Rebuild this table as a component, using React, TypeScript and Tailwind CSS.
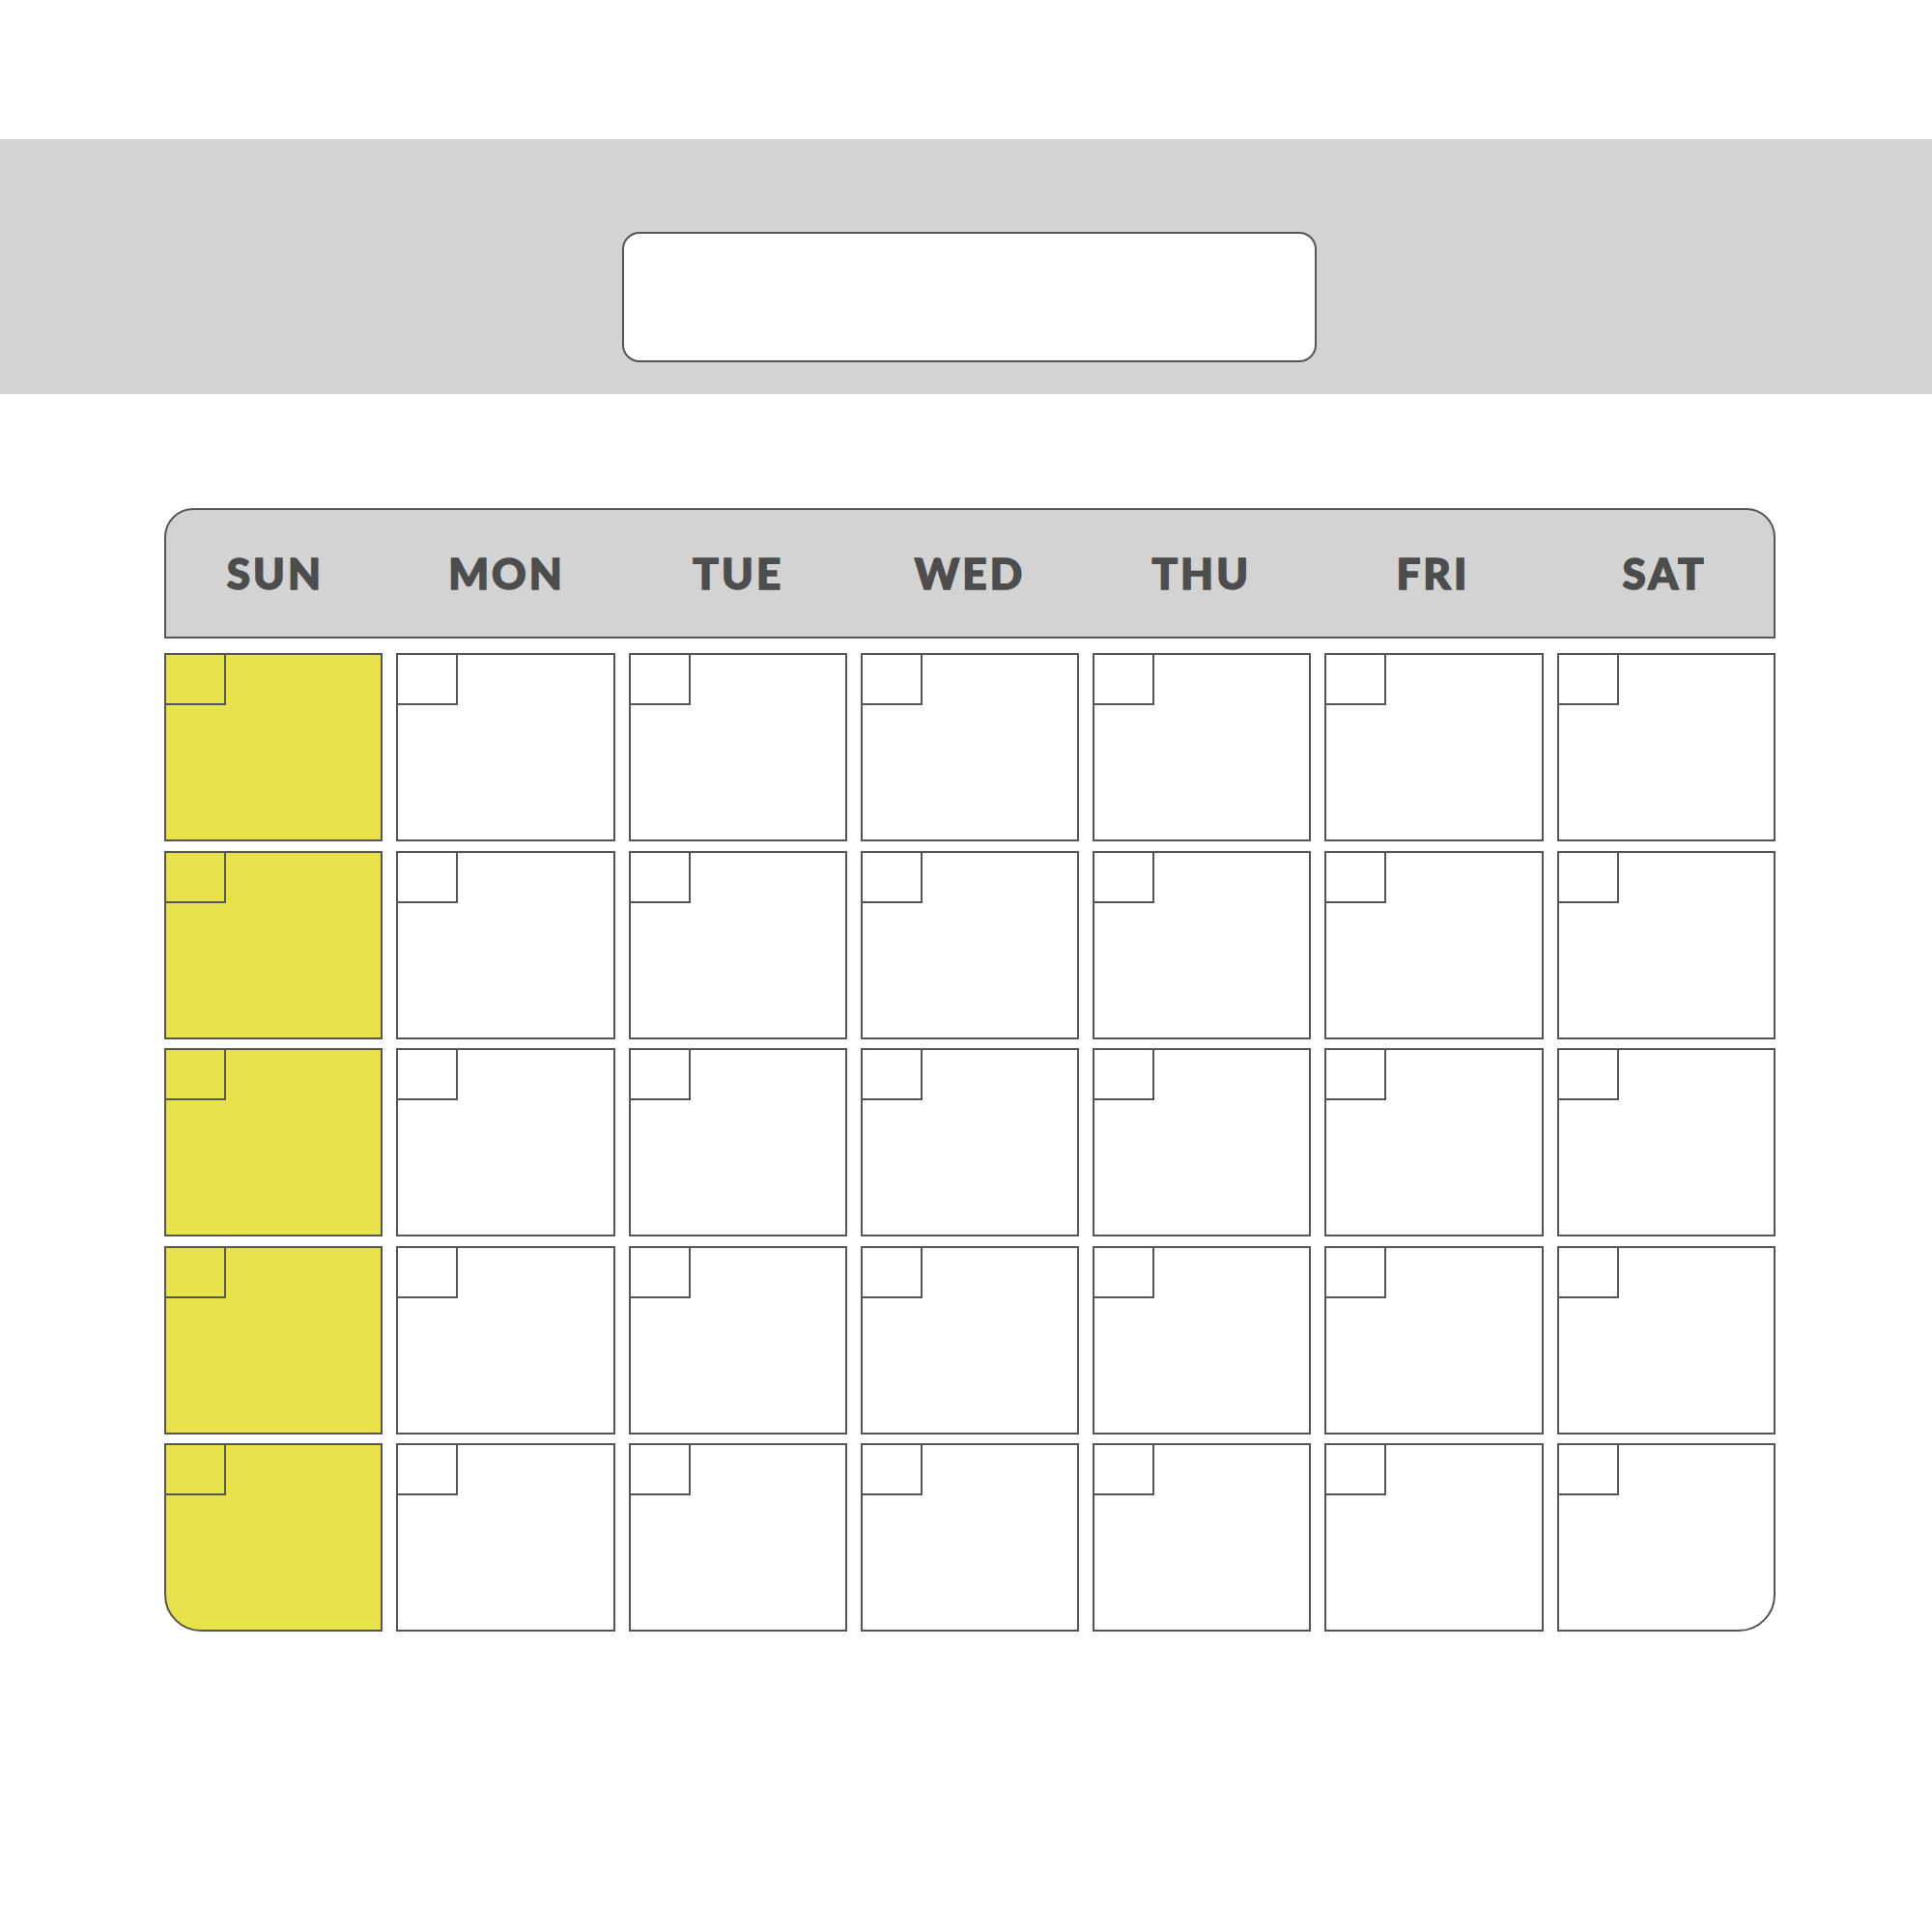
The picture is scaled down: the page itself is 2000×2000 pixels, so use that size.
const days = ["SUN", "MON", "TUE", "WED", "THU", "FRI", "SAT"];
const weeks = [0, 1, 2, 3, 4];

const App = () => {
  return (
    <div className="w-[2000px] h-[2000px] bg-white flex flex-col">
      {/* Title band */}
      <div className="mt-[144px] h-[264px] w-full bg-[#d3d3d3] pt-[96px] pl-[644px]">
        <div className="w-[719px] h-[135px] rounded-[18px] border-2 border-[#555555] bg-white" />
      </div>

      {/* Calendar */}
      <div className="ml-[170px] mt-[118px] w-[1668px] flex flex-col">
        {/* Weekday header */}
        <div className="h-[135px] rounded-t-[30px] border-2 border-[#555555] bg-[#d3d3d3] grid grid-cols-7 gap-x-[14px]">
          {days.map((day) => (
            <div
              key={day}
              className="flex items-center justify-center text-[44px] font-black tracking-[0.07em] text-[#4d4d4d] font-['Lato',sans-serif] [-webkit-text-stroke:1.5px_#4d4d4d] -mt-[2px]"
            >
              {day}
            </div>
          ))}
        </div>

        {/* Day cells */}
        <div className="mt-[15px] grid grid-cols-7 gap-x-[14px] gap-y-[9.5px]">
          {weeks.map((w) =>
            days.map((day, i) => {
              const isSun = i === 0;
              const isLast = w === weeks.length - 1;
              let corner = "";
              if (isLast && i === 0) corner = "rounded-bl-[38px]";
              if (isLast && i === 6) corner = "rounded-br-[38px]";
              return (
                <div
                  key={`${w}-${day}`}
                  className={`h-[195px] border-2 border-[#555555] ${
                    isSun ? "bg-[#e7e14a]" : "bg-white"
                  } ${corner}`}
                >
                  <div className="w-[62px] h-[52px] border-r-2 border-b-2 border-[#555555]" />
                </div>
              );
            })
          )}
        </div>
      </div>
    </div>
  );
};

export default App;
